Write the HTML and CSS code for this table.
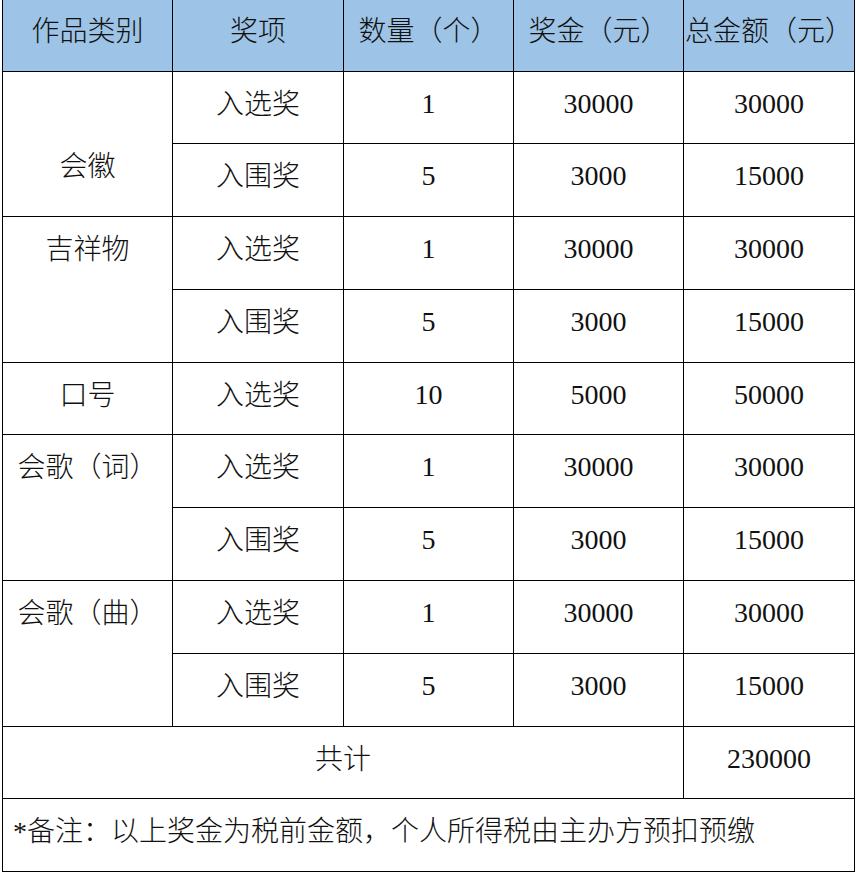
FILE: index.html
```html
<!DOCTYPE html>
<html lang="zh-CN">
<head>
<meta charset="utf-8">
<title>奖项设置</title>
<link rel="stylesheet" href="styles.css">
</head>
<body>
<table class="prize">
  <colgroup>
    <col class="c1"><col class="c2"><col class="c3"><col class="c4"><col class="c5">
  </colgroup>
  <thead>
    <tr class="head">
      <th>作品类别</th><th>奖项</th><th>数量（个）</th><th>奖金（元）</th><th>总金额（元）</th>
    </tr>
  </thead>
  <tbody>
    <tr>
      <td rowspan="2" class="cat cat-low">会徽</td>
      <td>入选奖</td><td class="num">1</td><td class="num">30000</td><td class="num">30000</td>
    </tr>
    <tr>
      <td>入围奖</td><td class="num">5</td><td class="num">3000</td><td class="num">15000</td>
    </tr>
    <tr>
      <td rowspan="2" class="cat">吉祥物</td>
      <td>入选奖</td><td class="num">1</td><td class="num">30000</td><td class="num">30000</td>
    </tr>
    <tr>
      <td>入围奖</td><td class="num">5</td><td class="num">3000</td><td class="num">15000</td>
    </tr>
    <tr>
      <td class="cat">口号</td>
      <td>入选奖</td><td class="num">10</td><td class="num">5000</td><td class="num">50000</td>
    </tr>
    <tr>
      <td rowspan="2" class="cat">会歌（词）</td>
      <td>入选奖</td><td class="num">1</td><td class="num">30000</td><td class="num">30000</td>
    </tr>
    <tr>
      <td>入围奖</td><td class="num">5</td><td class="num">3000</td><td class="num">15000</td>
    </tr>
    <tr>
      <td rowspan="2" class="cat">会歌（曲）</td>
      <td>入选奖</td><td class="num">1</td><td class="num">30000</td><td class="num">30000</td>
    </tr>
    <tr>
      <td>入围奖</td><td class="num">5</td><td class="num">3000</td><td class="num">15000</td>
    </tr>
    <tr>
      <td colspan="4">共计</td><td class="num">230000</td>
    </tr>
    <tr>
      <td colspan="5" class="note"><span class="star">*</span>备注：以上奖金为税前金额，个人所得税由主办方预扣预缴</td>
    </tr>
  </tbody>
</table>
</body>
</html>
```

FILE: styles.css
```css
html, body {
  margin: 0;
  padding: 0;
  background: #ffffff;
}

body {
  padding: 0 2px;
  font-family: "Noto Sans CJK SC", "Noto Sans", sans-serif;
  font-weight: 300;
  color: #111111;
}

.prize {
  width: 852px;
  border-collapse: collapse;
  table-layout: fixed;
  font-size: 28px;
  line-height: 40px;
}

.c1 { width: 170px; }
.c2 { width: 171px; }
.c3 { width: 170px; }
.c4 { width: 170px; }
.c5 { width: 171px; }

.prize th,
.prize td {
  border: 1.5px solid #000000;
  text-align: center;
  vertical-align: top;
  padding: 10px 0 0 0;
  font-weight: 300;
  white-space: nowrap;
}

.prize thead th {
  border-top: none;
  background: #9dc3e6;
  padding-top: 9px;
}

.head {
  height: 71px;
}

.prize tbody tr {
  height: 72.8px;
}

.prize td.num {
  font-family: "Liberation Serif", "Times New Roman", serif;
  font-weight: 400;
  padding-top: 12px;
}

.prize td.cat-low {
  padding-top: 72px;
}

.prize td.note {
  text-align: left;
  padding-left: 10px;
}

.star {
  font-family: "Liberation Serif", serif;
  font-weight: 400;
}
```
